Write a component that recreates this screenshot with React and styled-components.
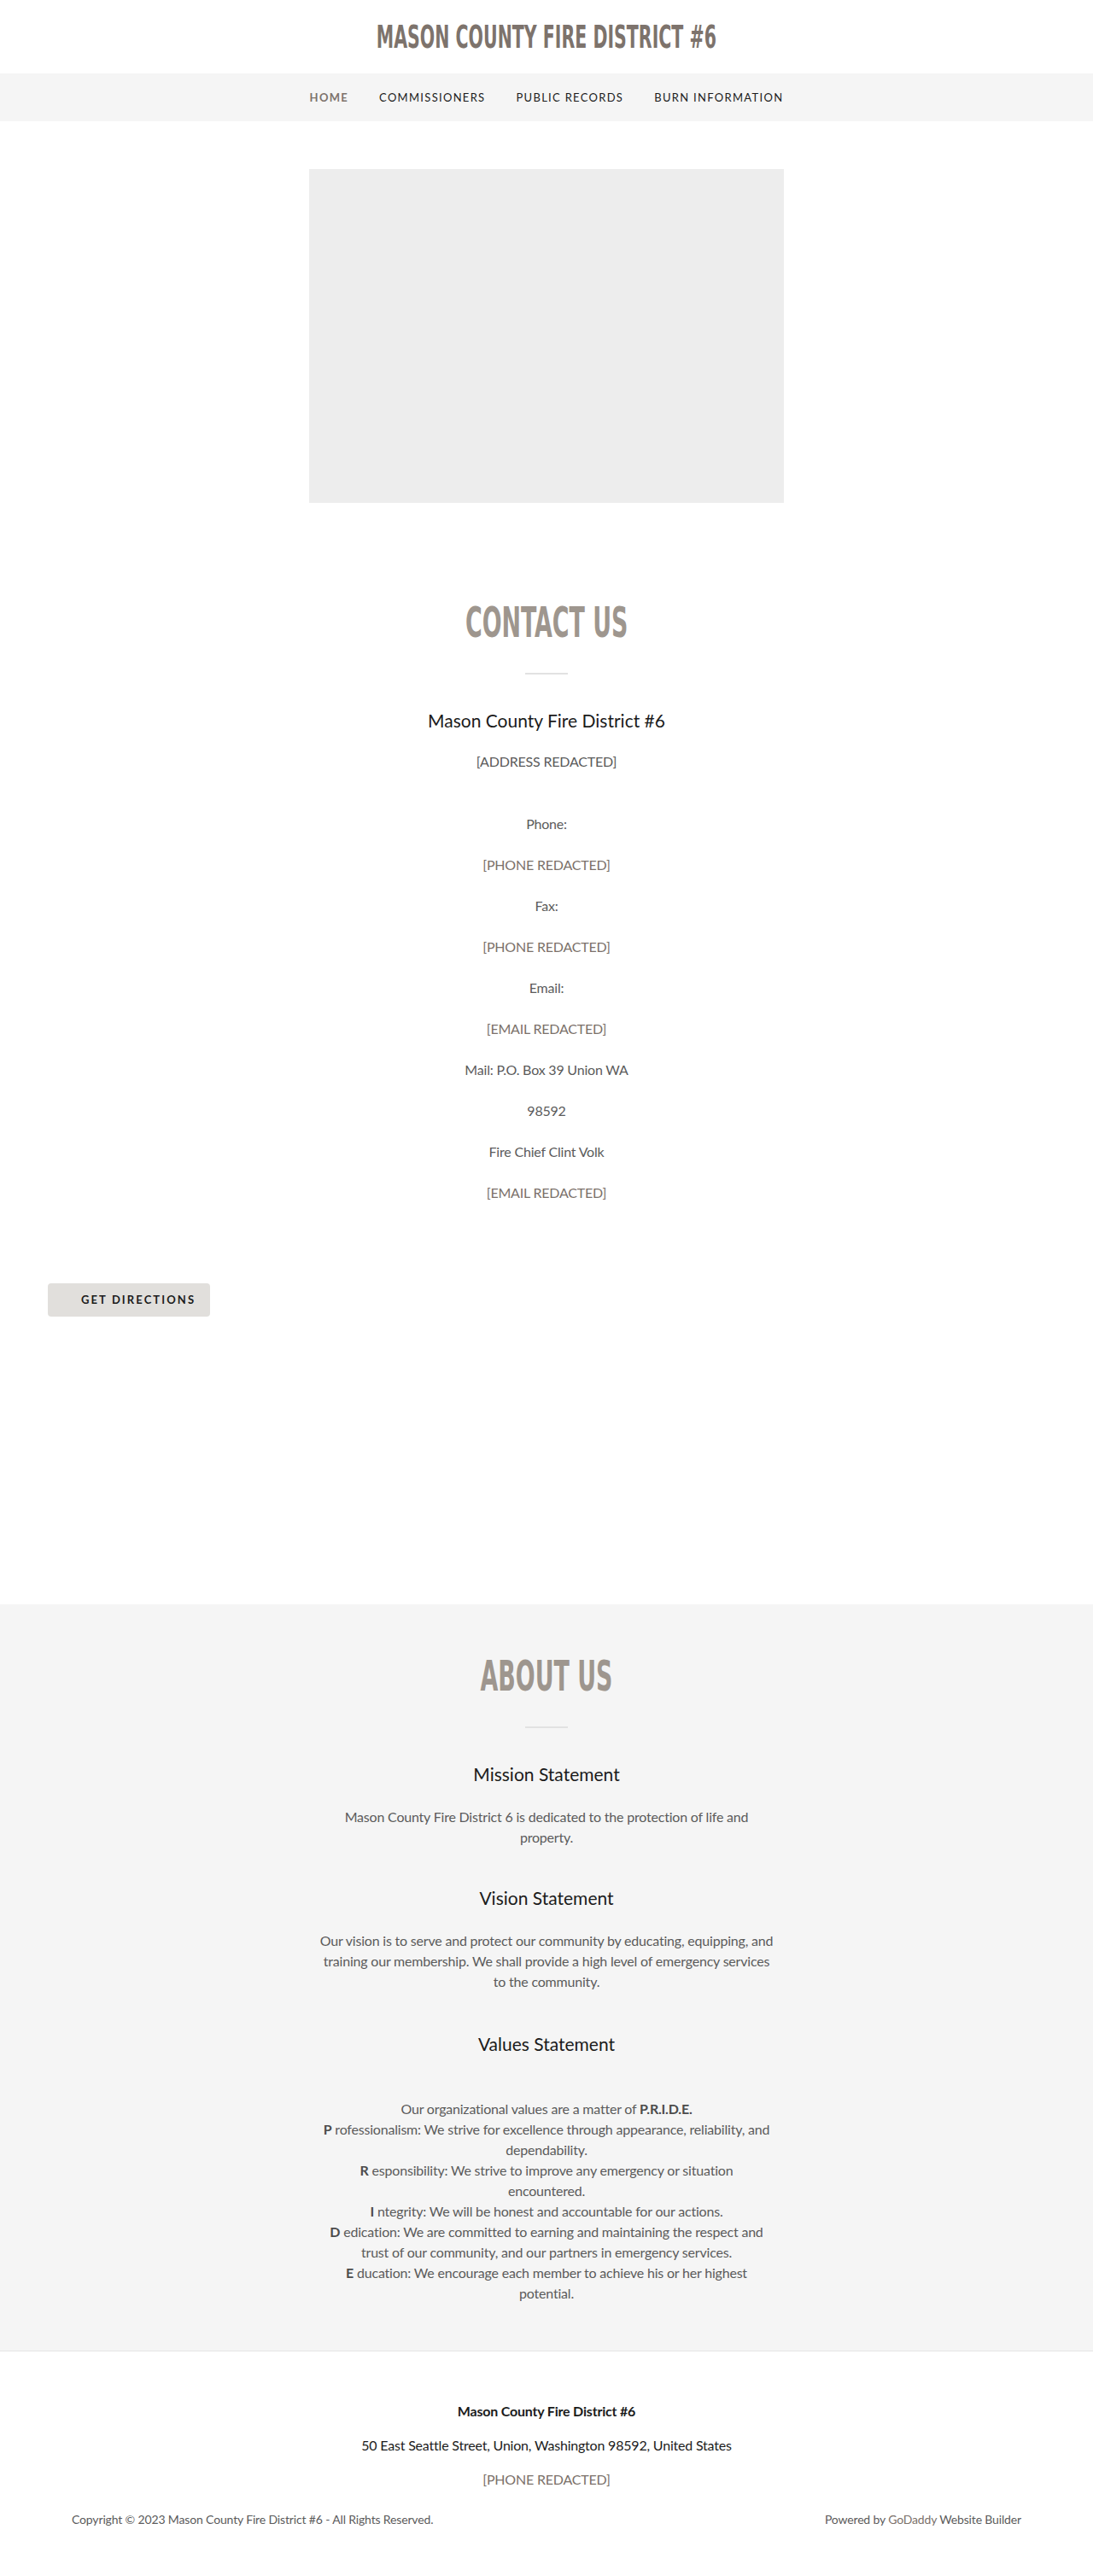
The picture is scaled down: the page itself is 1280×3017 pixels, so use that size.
import styled, { createGlobalStyle } from 'styled-components';

const GlobalStyle = createGlobalStyle`
  body {
    margin: 0;
    background: #ffffff;
    font-family: Lato, "Open Sans", sans-serif;
    color: #5b5b5b;
  }
  * { box-sizing: border-box; }
`;

const display = `
  font-family: "DejaVu Sans Condensed", "DejaVu Sans", sans-serif;
  font-stretch: condensed;
  font-weight: 700;
  text-transform: uppercase;
  margin: 0;
`;

const Header = styled.header`
  height: 86px;
  display: flex;
  align-items: center;
  justify-content: center;
`;

const Title = styled.h1`
  ${display}
  font-size: 38px;
  line-height: 1;
  color: #7d736c;
  transform: scaleX(0.6);
`;

const Nav = styled.nav`
  height: 56px;
  background: #f5f5f5;
  display: flex;
  align-items: center;
  justify-content: center;
  gap: 36px;
`;

const NavItem = styled.a`
  font-size: 13px;
  letter-spacing: 1.3px;
  text-transform: uppercase;
  color: ${p => (p.$active ? '#7d736c' : '#1b1b1b')};
  font-weight: ${p => (p.$active ? 700 : 400)};
  text-decoration: none;
`;

const Hero = styled.div`
  padding-top: 56px;
  display: flex;
  justify-content: center;
`;

const ImageBox = styled.div`
  width: 556px;
  height: 391px;
  background: #ededed;
`;

const Section = styled.section`
  background: ${p => p.$bg || 'transparent'};
  padding: ${p => p.$pad};
  display: flex;
  flex-direction: column;
  align-items: center;
  text-align: center;
`;

const SectionTitle = styled.h2`
  ${display}
  font-size: 49px;
  line-height: 1.2;
  color: #9e968e;
  transform: scaleX(0.61);
`;

const Divider = styled.hr`
  width: 50px;
  height: 2px;
  border: 0;
  margin: 28px 0 0;
  background: #e2e2e2;
`;

const SubHeading = styled.h4`
  margin: ${p => p.$mt || '40px'} 0 0;
  font-size: 21px;
  font-weight: 400;
  line-height: 28px;
  color: #1b1b1b;
`;

const Line = styled.p`
  margin: ${p => p.$mt || '24px'} 0 0;
  font-size: 16px;
  line-height: 24px;
  letter-spacing: -0.2px;
  color: ${p => (p.$link ? '#7b716a' : '#5b5b5b')};
`;

const TextBlock = styled.p`
  margin: ${p => p.$mt || '24px'} 0 0;
  max-width: ${p => p.$maxw || '534px'};
  font-size: 16px;
  line-height: 24px;
  letter-spacing: -0.2px;
  color: #5b5b5b;
  strong { font-weight: 700; color: #4c4c4c; }
`;

const ButtonRow = styled.div`
  padding: 94px 56px 337px;
`;

const Button = styled.a`
  display: inline-flex;
  align-items: center;
  height: 39px;
  padding: 0 17px 0 39px;
  background: #e1dfdc;
  border-radius: 4px;
  font-size: 13px;
  font-weight: 700;
  letter-spacing: 2.1px;
  text-transform: uppercase;
  color: #1b1b1b;
  text-decoration: none;
`;

const Footer = styled.footer`
  border-top: 1px solid #e6e6e6;
  padding: 58px 84px 50px;
  display: flex;
  flex-direction: column;
  align-items: center;
  text-align: center;
`;

const FooterLine = styled.p`
  margin: ${p => p.$mt || '16px'} 0 0;
  font-size: 16px;
  line-height: 24px;
  letter-spacing: -0.2px;
  font-weight: ${p => (p.$bold ? 700 : 400)};
  color: ${p => (p.$link ? '#7b716a' : '#1b1b1b')};
`;

const FooterBottom = styled.div`
  margin-top: 24px;
  width: 100%;
  display: flex;
  justify-content: space-between;
  font-size: 14px;
  line-height: 22px;
  letter-spacing: -0.15px;
  color: #5b5b5b;
  a { color: #7b716a; text-decoration: none; }
`;

const navItems = ['Home', 'Commissioners', 'Public Records', 'Burn Information'];

export default function App() {
  return (
    <>
      <GlobalStyle />
      <Header>
        <Title>Mason County Fire District #6</Title>
      </Header>
      <Nav>
        {navItems.map((n, i) => (
          <NavItem key={n} href="#" $active={i === 0}>{n}</NavItem>
        ))}
      </Nav>
      <Hero>
        <ImageBox />
      </Hero>

      <Section $pad="112px 0 0">
        <SectionTitle>Contact Us</SectionTitle>
        <Divider />
        <SubHeading>Mason County Fire District #6</SubHeading>
        <Line $mt="22px">[ADDRESS REDACTED]</Line>
        <Line $mt="49px">Phone:</Line>
        <Line $link>[PHONE REDACTED]</Line>
        <Line>Fax:</Line>
        <Line $link>[PHONE REDACTED]</Line>
        <Line>Email:</Line>
        <Line $link>[EMAIL REDACTED]</Line>
        <Line>Mail: P.O. Box 39 Union WA</Line>
        <Line>98592</Line>
        <Line>Fire Chief Clint Volk</Line>
        <Line $link>[EMAIL REDACTED]</Line>
      </Section>

      <ButtonRow>
        <Button href="#">Get Directions</Button>
      </ButtonRow>

      <Section $bg="#f5f5f5" $pad="56px 0 55px">
        <SectionTitle>About Us</SectionTitle>
        <Divider />
        <SubHeading>Mission Statement</SubHeading>
        <TextBlock $mt="24px">
          Mason County Fire District 6 is dedicated to the protection of life and property.
        </TextBlock>
        <SubHeading $mt="45px">Vision Statement</SubHeading>
        <TextBlock $mt="24px">
          Our vision is to serve and protect our community by educating, equipping, and
          training our membership. We shall provide a high level of emergency services to
          the community.
        </TextBlock>
        <SubHeading $mt="47px">Values Statement</SubHeading>
        <TextBlock $mt="50px" $maxw="527px">
          Our organizational values are a matter of <strong>P.R.I.D.E.</strong>
          <br />
          <strong>P</strong> rofessionalism: We strive for excellence through appearance, reliability, and dependability.
          <br />
          <strong>R</strong> esponsibility: We strive to improve any emergency or situation encountered.
          <br />
          <strong>I</strong> ntegrity: We will be honest and accountable for our actions.
          <br />
          <strong>D</strong> edication: We are committed to earning and maintaining the respect and trust of our community, and our partners in emergency services.
          <br />
          <strong>E</strong> ducation: We encourage each member to achieve his or her highest potential.
        </TextBlock>
      </Section>

      <Footer>
        <FooterLine $bold $mt="0">Mason County Fire District #6</FooterLine>
        <FooterLine>50 East Seattle Street, Union, Washington 98592, United States</FooterLine>
        <FooterLine $link>[PHONE REDACTED]</FooterLine>
        <FooterBottom>
          <span>Copyright © 2023 Mason County Fire District #6 - All Rights Reserved.</span>
          <span>Powered by <a href="#">GoDaddy</a> Website Builder</span>
        </FooterBottom>
      </Footer>
    </>
  );
}
